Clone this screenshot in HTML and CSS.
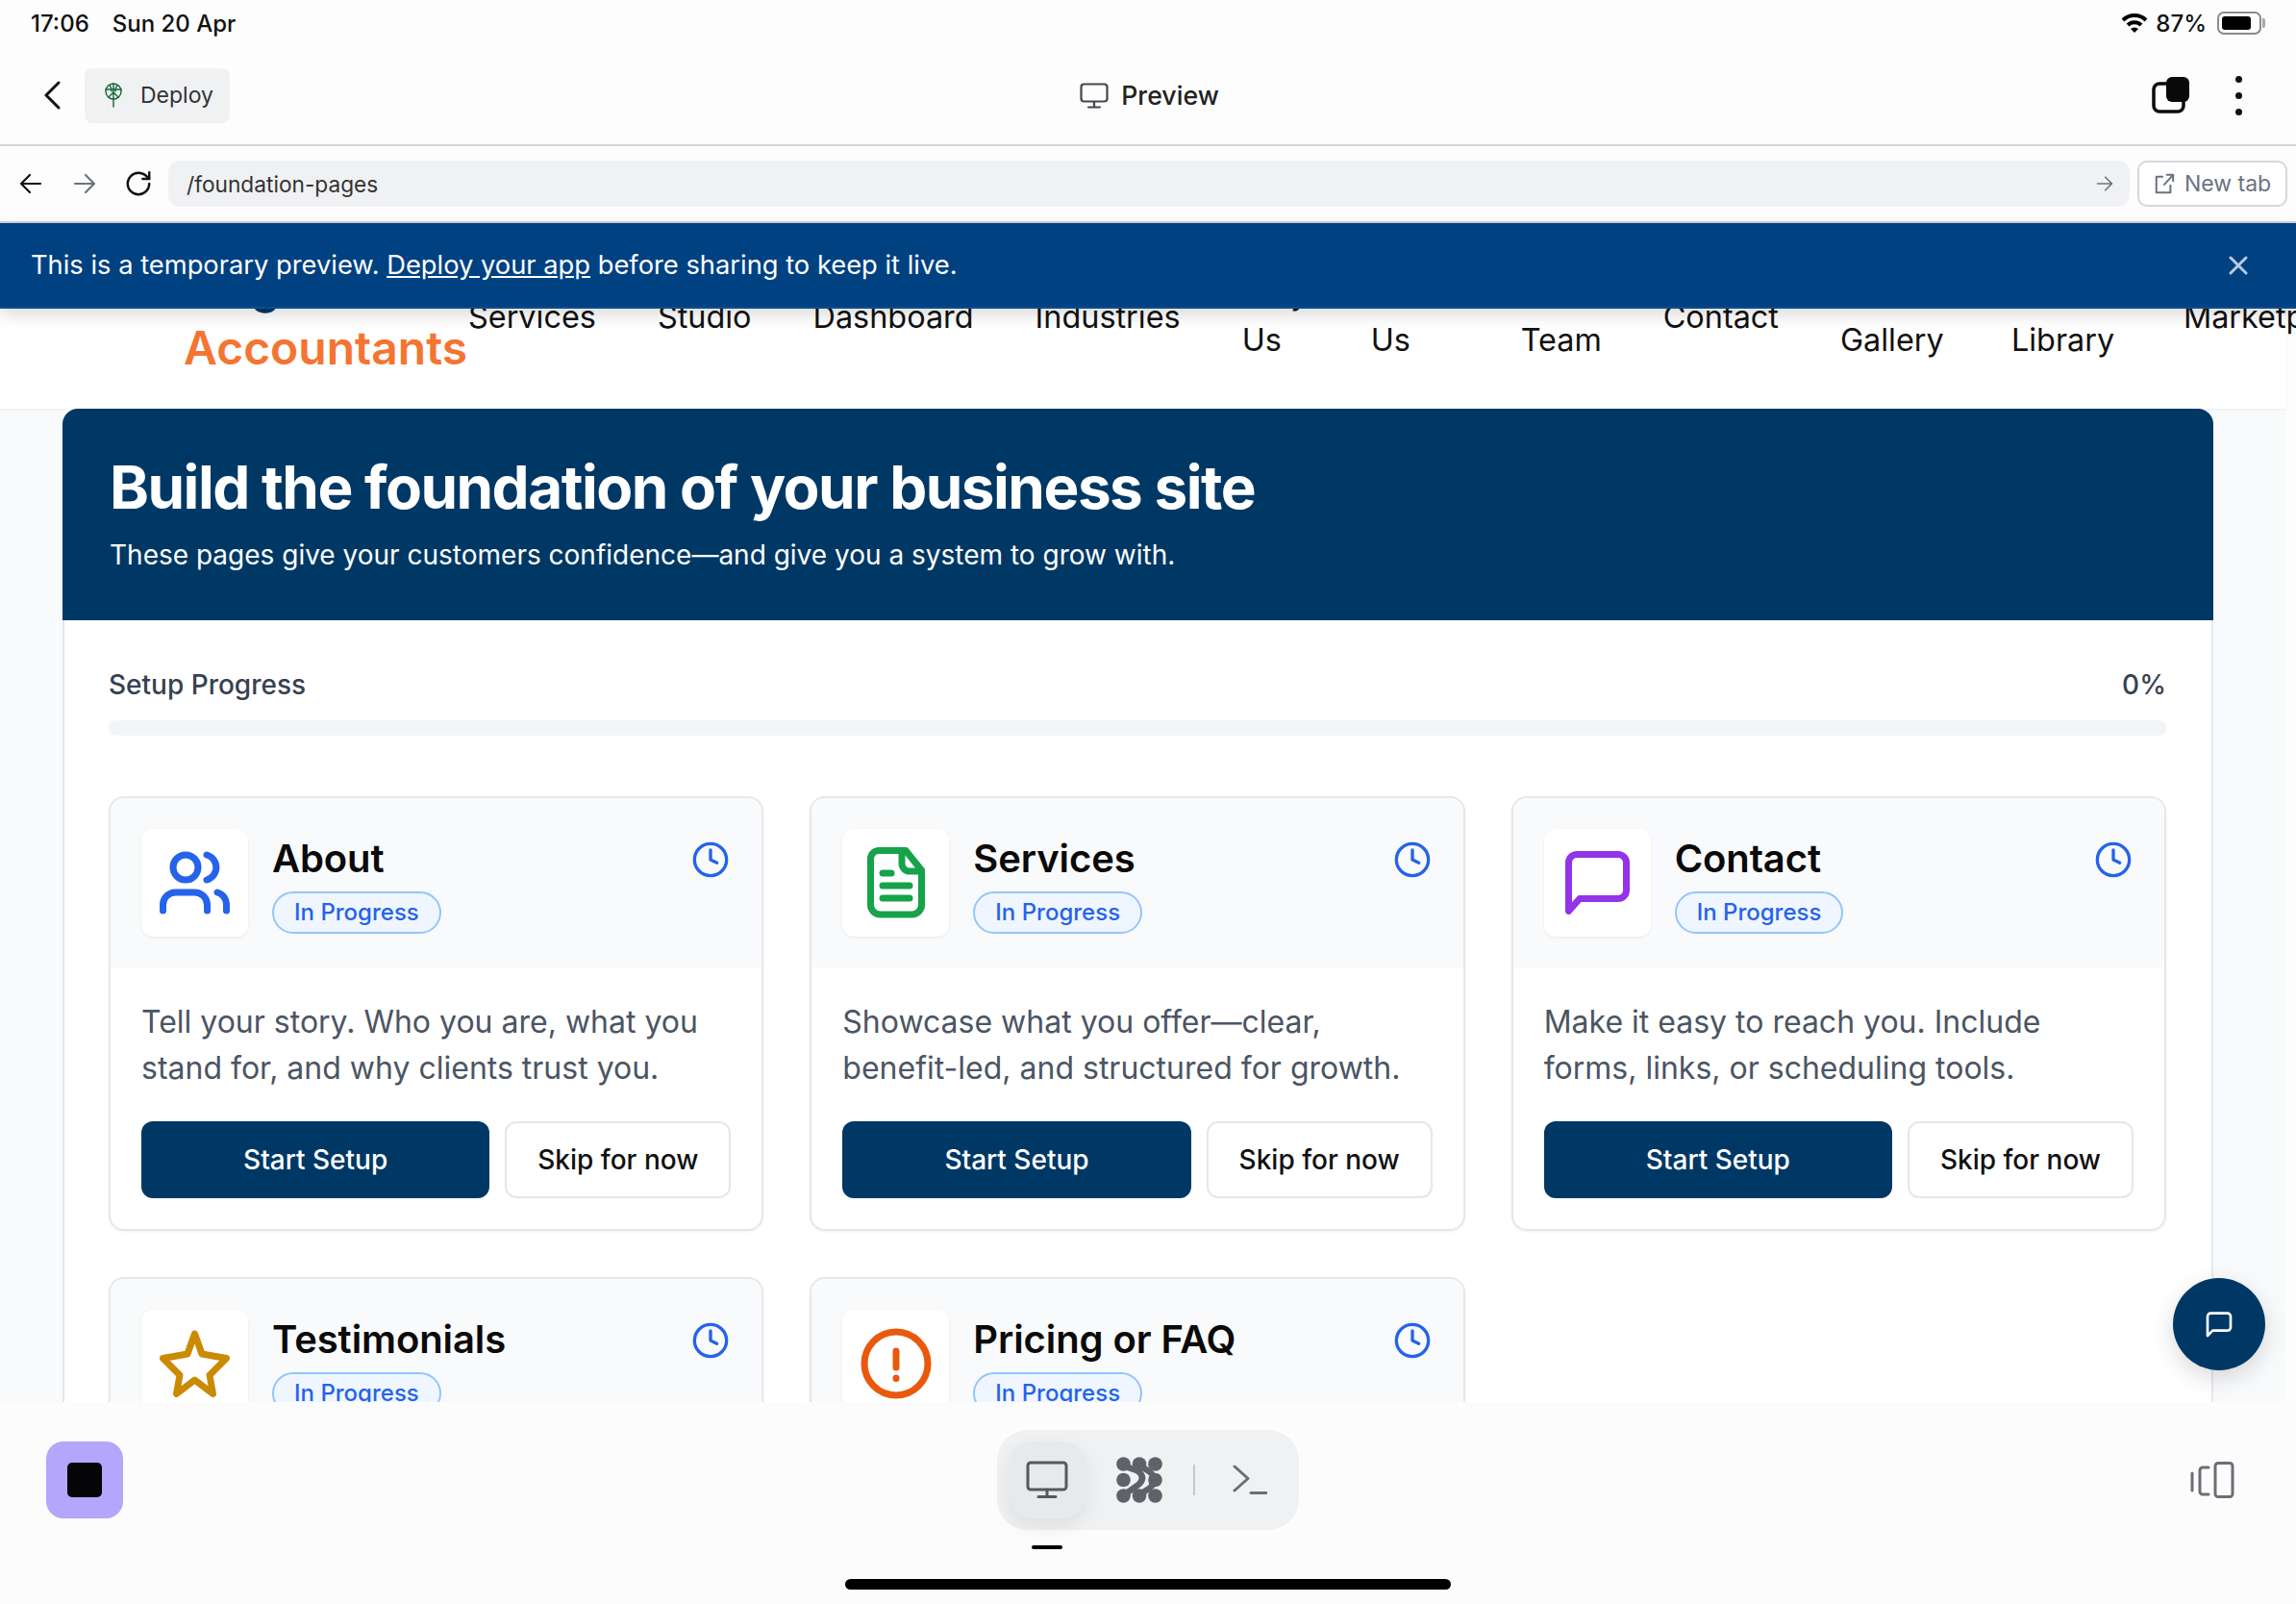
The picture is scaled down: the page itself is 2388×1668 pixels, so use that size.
FILE: index.html
```html
<!DOCTYPE html>
<html lang="en">
<head>
  <meta charset="UTF-8" />
  <meta name="viewport" content="width=device-width, initial-scale=1.0" />
  <title>Preview</title>
  <link rel="stylesheet" href="styles.css">
</head>
<body>

<!-- Tablet status bar -->
<div class="status-bar">
  <div class="status-left"><span>17:06</span><span>Sun 20 Apr</span></div>
  <div class="status-right">
    <svg width="28" height="24" viewBox="0 0 28 24" class="wifi">
      <path d="M2 9 a17 17 0 0 1 24 0" />
      <path d="M7 14 a10 10 0 0 1 14 0" />
      <path d="M14 22 l-4 -4 a6 6 0 0 1 8 0 z" class="wifi-dot" />
    </svg>
    <span>87%</span>
    <span class="battery"><span class="battery-fill"></span></span>
  </div>
</div>

<!-- App top bar -->
<div class="top-bar">
  <div class="top-left">
    <svg width="20" height="30" viewBox="0 0 20 30" class="line-icon dark"><path d="M16 2 L3 15 L16 28" /></svg>
    <div class="deploy-chip">
      <svg width="20" height="26" viewBox="0 0 20 26" class="line-icon green hair">
        <circle cx="10" cy="9" r="8" />
        <path d="M10 1 V25 M2 7 H18 M5 15 L10 10 L15 15 M6 2.5 Q8 5 8 9 M14 2.5 Q12 5 12 9" />
      </svg>
      <span>Deploy</span>
    </div>
  </div>
  <div class="top-title">
    <svg width="30" height="27" viewBox="0 0 30 27" class="line-icon gray-dark thin">
      <rect x="1.5" y="1.5" width="27" height="18" rx="3" />
      <path d="M15 20 V25 M9 25.5 H21" />
    </svg>
    <span>Preview</span>
  </div>
  <div class="top-right">
    <svg width="40" height="38" viewBox="0 0 40 38" class="tabs-icon">
      <rect x="2" y="7" width="31" height="29" rx="6" class="tabs-back" />
      <rect x="15" y="0" width="24" height="26" rx="6" class="tabs-front" />
    </svg>
    <div class="more-dots"><span></span><span></span><span></span></div>
  </div>
</div>

<!-- Address row -->
<div class="url-bar">
  <svg width="24" height="24" viewBox="0 0 24 24" class="line-icon dark thin nav-arrow"><path d="M22 12 H2 M11 3 L2 12 L11 21" /></svg>
  <svg width="24" height="24" viewBox="0 0 24 24" class="line-icon gray thin nav-arrow fwd"><path d="M2 12 H22 M13 3 L22 12 L13 21" /></svg>
  <svg width="30" height="30" viewBox="0 0 24 24" class="line-icon dark reload"><path d="M21 12a9 9 0 1 1-9-9c2.5 0 4.9 1 6.7 2.7L21 8" /><path d="M21 2.5V8h-5.5" /></svg>
  <div class="url-input">
    <span>/foundation-pages</span>
    <svg width="18" height="18" viewBox="0 0 24 24" class="line-icon gray thin"><path d="M2 12 H22 M13 3 L22 12 L13 21" /></svg>
  </div>
  <button class="new-tab">
    <svg width="22" height="22" viewBox="0 0 24 24" class="line-icon gray thin"><path d="M10 4 H3 V22 H19 V14 M12 13 L22 2 M15 2 H22 V9" /></svg>
    New tab
  </button>
</div>

<!-- Preview notice -->
<div class="banner">
  <p>This is a temporary preview. <a href="#">Deploy your app</a> before sharing to keep it live.</p>
  <svg width="20" height="20" viewBox="0 0 20 20" class="line-icon pale"><path d="M2 2 L18 18 M18 2 L2 18" /></svg>
</div>

<div class="preview">
  <div class="site">

    <nav class="site-nav">
      <div class="logo"><span>Elegant</span><span class="logo-accent">Accountants</span></div>
      <a href="#">Services</a>
      <a href="#">Studio</a>
      <a href="#">Dashboard</a>
      <a href="#">Industries</a>
      <a href="#" class="nav-w70">Why Us</a>
      <a href="#" class="nav-w92">About Us</a>
      <a href="#" class="nav-w84">Our Team</a>
      <a href="#">Contact</a>
      <a href="#" class="nav-w114">Photo Gallery</a>
      <a href="#" class="nav-w115">Media Library</a>
      <a href="#">Marketplace</a>
    </nav>

    <section class="hero">
      <h1>Build the foundation of your business site</h1>
      <p>These pages give your customers confidence—and give you a system to grow with.</p>
    </section>

    <section class="panel">
      <div class="progress-row"><span>Setup Progress</span><span>0%</span></div>
      <div class="progress-track"></div>

      <div class="card-grid">

        <article class="card">
          <header class="card-head">
            <div class="card-icon">
              <svg width="73" height="66" viewBox="0 0 73 66" class="line-icon heavy blue">
                <circle cx="27" cy="17" r="13" />
                <path d="M49 4 a13.5 13.5 0 0 1 0 26" />
                <path d="M3.5 62 v-6 a13 13 0 0 1 13 -13 h20 a13 13 0 0 1 13 13 v6" />
                <path d="M60 43 a13 13 0 0 1 9.5 13 v6" />
              </svg>
            </div>
            <div class="card-heading">
              <h3>About</h3>
              <span class="badge">In Progress</span>
            </div>
            <svg width="40" height="40" viewBox="0 0 24 24" class="line-icon blue clock"><circle cx="12" cy="12" r="10" /><path d="M12 6 V12 L16 14" /></svg>
          </header>
          <div class="card-body">
            <p>Tell your story. Who you are, what you stand for, and why clients trust you.</p>
            <div class="card-actions">
              <button class="btn-primary">Start Setup</button>
              <button class="btn-skip">Skip for now</button>
            </div>
          </div>
        </article>

        <article class="card">
          <header class="card-head">
            <div class="card-icon">
              <svg width="60" height="74" viewBox="0 0 60 74" class="line-icon heavy green-bright">
                <path d="M12 3.5 H40 L56.5 24 V60 a10 10 0 0 1 -10 10 H13.5 a10 10 0 0 1 -10 -10 V12 a8.5 8.5 0 0 1 8.5 -8.5 z" />
                <path d="M36 4 V17 a8 8 0 0 0 8 8 H56" />
                <path d="M16 27 H25 M16 40 H44 M16 53 H44" />
              </svg>
            </div>
            <div class="card-heading">
              <h3>Services</h3>
              <span class="badge">In Progress</span>
            </div>
            <svg width="40" height="40" viewBox="0 0 24 24" class="line-icon blue clock"><circle cx="12" cy="12" r="10" /><path d="M12 6 V12 L16 14" /></svg>
          </header>
          <div class="card-body">
            <p>Showcase what you offer—clear, benefit-led, and structured for growth.</p>
            <div class="card-actions">
              <button class="btn-primary">Start Setup</button>
              <button class="btn-skip">Skip for now</button>
            </div>
          </div>
        </article>

        <article class="card">
          <header class="card-head">
            <div class="card-icon">
              <svg width="67" height="66" viewBox="0 0 67 66" class="line-icon heavy purple">
                <path d="M3.5 62.5 V12 a8.5 8.5 0 0 1 8.5 -8.5 H55 a8.5 8.5 0 0 1 8.5 8.5 V41 a8.5 8.5 0 0 1 -8.5 8.5 H15 z" />
              </svg>
            </div>
            <div class="card-heading">
              <h3>Contact</h3>
              <span class="badge">In Progress</span>
            </div>
            <svg width="40" height="40" viewBox="0 0 24 24" class="line-icon blue clock"><circle cx="12" cy="12" r="10" /><path d="M12 6 V12 L16 14" /></svg>
          </header>
          <div class="card-body">
            <p>Make it easy to reach you. Include forms, links, or scheduling tools.</p>
            <div class="card-actions">
              <button class="btn-primary">Start Setup</button>
              <button class="btn-skip">Skip for now</button>
            </div>
          </div>
        </article>

        <article class="card">
          <header class="card-head">
            <div class="card-icon">
              <svg width="73" height="70" viewBox="0 0 73 70" class="line-icon heavy amber">
                <path d="M36.5 4 L44 25 L69.5 29.5 L52 47 L55.5 66.5 L36.5 52 L17.5 66.5 L21 47 L3.5 29.5 L29 25 z" />
              </svg>
            </div>
            <div class="card-heading">
              <h3>Testimonials</h3>
              <span class="badge">In Progress</span>
            </div>
            <svg width="40" height="40" viewBox="0 0 24 24" class="line-icon blue clock"><circle cx="12" cy="12" r="10" /><path d="M12 6 V12 L16 14" /></svg>
          </header>
        </article>

        <article class="card">
          <header class="card-head">
            <div class="card-icon">
              <svg width="74" height="74" viewBox="0 0 74 74" class="line-icon heavy orange">
                <circle cx="37" cy="37" r="33" />
                <path d="M37 24 V41 M37 52 V52.5" />
              </svg>
            </div>
            <div class="card-heading">
              <h3>Pricing or FAQ</h3>
              <span class="badge">In Progress</span>
            </div>
            <svg width="40" height="40" viewBox="0 0 24 24" class="line-icon blue clock"><circle cx="12" cy="12" r="10" /><path d="M12 6 V12 L16 14" /></svg>
          </header>
        </article>

      </div>
    </section>
  </div>

  <button class="chat-fab">
    <svg width="32" height="32" viewBox="0 0 24 24" class="line-icon white"><path d="M3 21 V6 a2.5 2.5 0 0 1 2.5 -2.5 H18.5 a2.5 2.5 0 0 1 2.5 2.5 V14.5 a2.5 2.5 0 0 1 -2.5 2.5 H7 z" /></svg>
  </button>
</div>

<!-- Bottom dock -->
<div class="dock">
  <button class="stop-btn"><span></span></button>

  <div class="dock-center">
    <div class="view-switch">
      <div class="view-active">
        <svg width="44" height="40" viewBox="0 0 44 40" class="line-icon dock-gray">
          <rect x="2" y="2" width="40" height="28" rx="3" />
          <path d="M22 30 V37 M13 37.5 H31" />
        </svg>
      </div>
      <svg width="48" height="48" viewBox="0 0 48 48" class="dots-icon">
        <circle cx="7.5" cy="7.5" r="7.3" /><circle cx="24" cy="7.5" r="7.3" /><circle cx="40.5" cy="7.5" r="7.3" />
        <circle cx="7.5" cy="24" r="7.3" /><circle cx="40.5" cy="24" r="7.3" />
        <circle cx="7.5" cy="40.5" r="7.3" /><circle cx="24" cy="40.5" r="7.3" /><circle cx="40.5" cy="40.5" r="7.3" />
        <path d="M7.5 7.5 C15 14 20 12 24 16 C28 20 28 24 24 28 C20 32 14 34 7.5 40.5" />
        <path d="M24 7.5 C28 14 36 12 40.5 24 C36 36 28 34 24 40.5" />
      </svg>
      <span class="view-divider"></span>
      <svg width="36" height="32" viewBox="0 0 36 32" class="line-icon dock-gray-2">
        <path d="M2 2 L16 14.5 L2 27 M19 29.5 H35" />
      </svg>
    </div>
    <span class="view-marker"></span>
  </div>

  <svg width="46" height="38" viewBox="0 0 46 38" class="line-icon dock-gray-2 panel-toggle">
    <path d="M2 12 V30 M19 6 H13 a3 3 0 0 0 -3 3 V31 a3 3 0 0 0 3 3 H19" />
    <rect x="26" y="1.5" width="18" height="35" rx="3" />
  </svg>

  <span class="home-bar"></span>
</div>

</body>
</html>
```

FILE: styles.css
```css
/* General */
html, body {
  margin: 0;
  padding: 0;
}

body {
  width: 2388px;
  height: 1668px;
  display: flex;
  flex-direction: column;
  overflow: hidden;
  background-color: #fdfdfd;
  font-family: "Inter", "Liberation Sans", sans-serif;
  color: #111;
}

button {
  font-family: inherit;
  cursor: pointer;
}

/* Stroke icons */
.line-icon {
  fill: none;
  stroke: currentColor;
  stroke-width: 3;
  stroke-linecap: round;
  stroke-linejoin: round;
  flex-shrink: 0;
}

.line-icon.heavy { stroke-width: 7; }
.line-icon.thin { stroke-width: 2.2; }
.line-icon.hair { stroke-width: 1.4; }
.clock.line-icon { stroke-width: 2; }
.reload.line-icon { stroke-width: 1.9; }
.dark { color: #111; }
.gray { color: #6b7280; }
.gray-dark { color: #44474d; }
.green { color: #166534; }
.pale { color: #b9cbe0; }
.white { color: #fff; stroke-width: 2; }
.blue { color: #2563eb; }
.green-bright { color: #16a34a; }
.purple { color: #9333ea; }
.amber { color: #ca8a04; }
.orange { color: #ea580c; }
.dock-gray { color: #55585f; }
.dock-gray-2 { color: #6b6e76; }

/* Status bar */
.status-bar {
  height: 48px;
  padding: 0 36px 0 32px;
  display: flex;
  align-items: center;
  justify-content: space-between;
  font-size: 24px;
  font-weight: 500;
}

.status-left {
  display: flex;
  gap: 24px;
}

.status-right {
  display: flex;
  align-items: center;
  gap: 8px;
}

.wifi {
  fill: none;
  stroke: #000;
  stroke-width: 4;
}

.wifi-dot {
  fill: #000;
  stroke: none;
}

.battery {
  width: 46px;
  height: 24px;
  margin-left: 3px;
  padding: 3px;
  box-sizing: border-box;
  border: 2px solid #8b8b8b;
  border-radius: 7px;
  display: block;
  position: relative;
}

/* battery nub */
.battery::after {
  content: "";
  position: absolute;
  top: 5px;
  right: -6px;
  width: 3px;
  height: 10px;
  background-color: #a8a8a8;
  border-radius: 0 2px 2px 0;
}

.battery-fill {
  display: block;
  width: 84%;
  height: 100%;
  background-color: #000;
  border-radius: 3px;
}

/* Top bar */
.top-bar {
  height: 102px;
  padding: 0 56px 0 45px;
  display: flex;
  align-items: center;
  justify-content: space-between;
  border-bottom: 2px solid #d4d4d4;
}

.top-left {
  display: flex;
  align-items: center;
  gap: 23px;
  width: 500px;
}

.deploy-chip {
  height: 57px;
  width: 151px;
  padding-left: 20px;
  box-sizing: border-box;
  display: flex;
  align-items: center;
  gap: 18px;
  background-color: #f0f1f3;
  border-radius: 8px;
  font-size: 23px;
  color: #333;
}

.top-title {
  margin-left: 14px;
  display: flex;
  align-items: center;
  gap: 13px;
  font-size: 26.7px;
  font-weight: 500;
  color: #222;
}

.top-right {
  width: 500px;
  display: flex;
  justify-content: flex-end;
  align-items: center;
  gap: 47px;
}

.tabs-back {
  fill: #fff;
  stroke: #0a0a0c;
  stroke-width: 3.5;
}

.tabs-front {
  fill: #0a0a0c;
}

.more-dots {
  display: flex;
  flex-direction: column;
  gap: 10px;
}

.more-dots span {
  width: 7px;
  height: 7px;
  background-color: #111;
  border-radius: 50%;
}

/* Address row */
.url-bar {
  height: 78px;
  padding: 0 9px 0 20px;
  display: flex;
  align-items: center;
  border-bottom: 2px solid #cfd4d9;
}

.nav-arrow.fwd {
  margin-left: 32px;
}

.reload {
  margin-left: 29px;
}

.url-input {
  flex: 1;
  height: 48px;
  margin-left: 16px;
  padding: 0 17px 0 19px;
  display: flex;
  align-items: center;
  justify-content: space-between;
  background-color: #f0f1f3;
  border-radius: 12px;
  font-size: 22.7px;
  color: #333;
}

.new-tab {
  width: 156px;
  height: 48px;
  margin-left: 8px;
  padding: 0;
  display: flex;
  align-items: center;
  justify-content: center;
  gap: 10px;
  background-color: #fff;
  border: 2px solid #d4d7dc;
  border-radius: 10px;
  font-size: 23px;
  color: #6b7280;
}

/* Notice */
.banner {
  height: 89px;
  padding: 0 50px 0 32px;
  box-sizing: border-box;
  display: flex;
  align-items: center;
  justify-content: space-between;
  background-color: #004182;
  border-bottom: 2px solid #0a4e8f;
  box-shadow: 0 6px 16px rgba(0,0,0,0.15);
  color: #fff;
  font-size: 27.3px;
  position: relative;
  z-index: 2;
}

.banner p {
  margin: 0;
}

.banner a {
  color: #fff;
}

/* Previewed site */
.preview {
  flex: 1;
  min-height: 0;
  position: relative;
  overflow: hidden;
}

.site {
  display: flow-root;
  width: 2377px;
  height: 100%;
  background-color: #f9fafb;
}

.site-nav {
  margin-top: -86px;
  padding: 31px 0 31px 191px;
  display: flex;
  align-items: center;
  gap: 64px;
  background-color: #fff;
  box-shadow: 0 1px 3px rgba(0,0,0,0.05);
  font-size: 32.4px;
  line-height: 48px;
}

.site-nav a {
  color: #111;
  text-decoration: none;
  flex-shrink: 0;
}

.nav-w70 { width: 70px; }
.nav-w92 { width: 92px; }
.nav-w84 { width: 84px; }
.nav-w114 { width: 114px; }
.nav-w115 { width: 115px; }

.logo {
  width: 296px;
  margin-right: -64px;
  flex-shrink: 0;
  display: flex;
  flex-direction: column;
  font-size: 48px;
  font-weight: 600;
  line-height: 64px;
  color: #003865;
}

.logo-accent {
  color: #f47432;
}

.hero {
  margin-left: 65px;
  width: 2237px;
  height: 220px;
  padding: 0 49px;
  box-sizing: border-box;
  background-color: #003865;
  border-radius: 16px 16px 0 0;
  color: #fff;
  position: relative;
  z-index: 1;
}

.hero h1 {
  margin: 0;
  padding-top: 46px;
  font-size: 62px;
  font-weight: 700;
  line-height: 72px;
  letter-spacing: -1.5px;
}

.hero p {
  margin: 14px 0 0;
  font-size: 28px;
  line-height: 40px;
}

.panel {
  margin-left: 65px;
  width: 2237px;
  height: 900px;
  padding: 47px 47px 0 46px;
  box-sizing: border-box;
  background-color: #fff;
  border: 2px solid #e5e7eb;
  border-top: none;
}

.progress-row {
  display: flex;
  justify-content: space-between;
  font-size: 28px;
  line-height: 40px;
  font-weight: 500;
  color: #374151;
}

.progress-track {
  height: 16px;
  margin-top: 17px;
  background-color: #f3f4f6;
  border-radius: 8px;
}

.card-grid {
  margin-top: 63px;
  display: grid;
  grid-template-columns: repeat(3, 1fr);
  gap: 48px;
  align-items: start;
}

.card {
  background-color: #fff;
  border: 2px solid #e5e7eb;
  border-radius: 16px;
  overflow: hidden;
  box-shadow: 0 1px 3px rgba(0,0,0,0.06);
}

.card-head {
  height: 176px;
  padding: 33px 32px 32px;
  box-sizing: border-box;
  display: flex;
  align-items: flex-start;
  gap: 25px;
  background-color: #f9fafb;
}

.card-icon {
  width: 111px;
  height: 112px;
  margin-top: -1px;
  flex-shrink: 0;
  display: flex;
  align-items: center;
  justify-content: center;
  background-color: #fff;
  border-radius: 12px;
  box-shadow: 0 1px 3px rgba(0,0,0,0.07);
}

.card-heading {
  flex: 1;
}

.card-heading h3 {
  margin: 0;
  font-size: 40px;
  font-weight: 600;
  line-height: 60px;
  letter-spacing: -0.1px;
  color: #0a0a0a;
}

.badge {
  display: inline-block;
  margin-top: 4px;
  padding: 0 21px;
  height: 44px;
  box-sizing: border-box;
  line-height: 40px;
  background-color: #eff6ff;
  border: 2px solid #93c5fd;
  border-radius: 22px;
  font-size: 24px;
  font-weight: 500;
  color: #2563eb;
}

.clock {
  margin-top: 11px;
  margin-right: 1px;
}

.card-body {
  padding: 33px 32px 32px;
}

.card-body p {
  margin: 0;
  font-size: 32px;
  line-height: 48px;
  color: #4b5563;
}

.card-actions {
  margin-top: 31px;
  display: flex;
  gap: 16px;
}

.btn-primary {
  flex: 1;
  height: 80px;
  background-color: #003865;
  border: none;
  border-radius: 12px;
  font-size: 28px;
  font-weight: 500;
  color: #fff;
}

.btn-skip {
  width: 235px;
  height: 80px;
  padding: 0;
  background-color: #fff;
  border: 2px solid #e5e7eb;
  border-radius: 12px;
  font-size: 28px;
  font-weight: 500;
  color: #111;
}

.chat-fab {
  position: absolute;
  top: 1008px;
  left: 2260px;
  width: 96px;
  height: 96px;
  display: flex;
  align-items: center;
  justify-content: center;
  background-color: #003865;
  border: none;
  border-radius: 50%;
  box-shadow: 0 8px 24px rgba(0,0,0,0.15);
  z-index: 3;
}

/* Bottom dock */
.dock {
  height: 210px;
  flex-shrink: 0;
  position: relative;
  padding: 29px 64px 0 48px;
  box-sizing: border-box;
  display: flex;
  justify-content: space-between;
  align-items: flex-start;
  background-color: #fcfcfc;
  z-index: 4;
}

.stop-btn {
  width: 80px;
  height: 80px;
  margin-top: 12px;
  padding: 0;
  display: flex;
  align-items: center;
  justify-content: center;
  background-color: #b3a6fc;
  border: none;
  border-radius: 18px;
}

.stop-btn span {
  width: 36px;
  height: 36px;
  background-color: #050508;
  border-radius: 5px;
}

.dock-center {
  display: flex;
  flex-direction: column;
  margin-right: 18px;
}

.view-switch {
  width: 314px;
  height: 104px;
  padding: 0 12px;
  box-sizing: border-box;
  display: flex;
  align-items: center;
  background-color: #f0f1f3;
  border-radius: 32px;
}

.view-active {
  width: 80px;
  height: 80px;
  margin-right: 32px;
  display: flex;
  align-items: center;
  justify-content: center;
  background-color: #e8e9eb;
  border-radius: 24px;
  box-shadow: 0 8px 20px rgba(0,0,0,0.08);
}

.dots-icon {
  fill: #5f6268;
  stroke: none;
  flex-shrink: 0;
}

.dots-icon path {
  fill: none;
  stroke: #5f6268;
  stroke-width: 6.5;
}

.view-divider {
  width: 2px;
  height: 32px;
  margin: 0 39px 0 32px;
  background-color: #c5c7cb;
}

.view-marker {
  width: 32px;
  height: 4px;
  margin: 16px 0 0 36px;
  background-color: #000;
  border-radius: 2px;
}

.panel-toggle {
  margin-top: 33px;
}

.home-bar {
  position: absolute;
  left: 879px;
  top: 184px;
  width: 630px;
  height: 11px;
  background-color: #000;
  border-radius: 6px;
}
```
